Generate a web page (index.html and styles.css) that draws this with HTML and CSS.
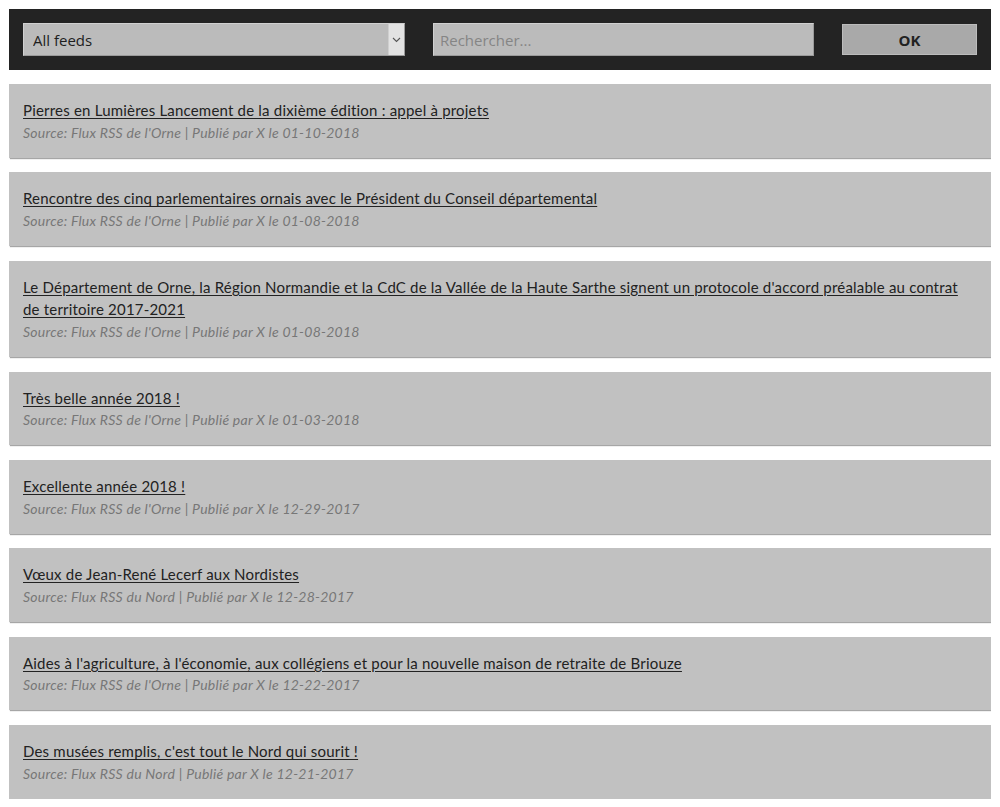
FILE: index.html
```html
<!DOCTYPE html>
<html lang="fr">
<head>
<meta charset="utf-8">
<title>Flux RSS</title>
<link rel="stylesheet" href="styles.css">
</head>
<body>
<header class="toolbar">
  <div class="select-wrap">
    <select class="feed-select">
      <option>All feeds</option>
    </select>
    <span class="select-arrow"><svg width="9" height="6" viewBox="0 0 9 6"><path d="M1 1 L4.5 4.5 L8 1" fill="none" stroke="#555" stroke-width="1.1"/></svg></span>
  </div>
  <input class="search" type="text" placeholder="Rechercher...">
  <button class="ok">OK</button>
</header>
<main class="list">
  <article class="card">
    <a class="title" href="#">Pierres en Lumières Lancement de la dixième édition : appel à projets</a>
    <p class="meta">Source: Flux RSS de l'Orne | Publié par X le 01-10-2018</p>
  </article>
  <article class="card">
    <a class="title" href="#">Rencontre des cinq parlementaires ornais avec le Président du Conseil départemental</a>
    <p class="meta">Source: Flux RSS de l'Orne | Publié par X le 01-08-2018</p>
  </article>
  <article class="card">
    <a class="title" href="#">Le Département de Orne, la Région Normandie et la CdC de la Vallée de la Haute Sarthe signent un protocole d'accord préalable au contrat de territoire 2017-2021</a>
    <p class="meta">Source: Flux RSS de l'Orne | Publié par X le 01-08-2018</p>
  </article>
  <article class="card">
    <a class="title" href="#">Très belle année 2018 !</a>
    <p class="meta">Source: Flux RSS de l'Orne | Publié par X le 01-03-2018</p>
  </article>
  <article class="card">
    <a class="title" href="#">Excellente année 2018 !</a>
    <p class="meta">Source: Flux RSS de l'Orne | Publié par X le 12-29-2017</p>
  </article>
  <article class="card">
    <a class="title" href="#">Vœux de Jean-René Lecerf aux Nordistes</a>
    <p class="meta">Source: Flux RSS du Nord | Publié par X le 12-28-2017</p>
  </article>
  <article class="card">
    <a class="title" href="#">Aides à l'agriculture, à l'économie, aux collégiens et pour la nouvelle maison de retraite de Briouze</a>
    <p class="meta">Source: Flux RSS de l'Orne | Publié par X le 12-22-2017</p>
  </article>
  <article class="card">
    <a class="title" href="#">Des musées remplis, c'est tout le Nord qui sourit !</a>
    <p class="meta">Source: Flux RSS du Nord | Publié par X le 12-21-2017</p>
  </article>
</main>
</body>
</html>
```
FILE: styles.css
```css
* { box-sizing: border-box; }
body {
  margin: 9px;
  background: #ffffff;
  font-family: "Lato", "Open Sans", sans-serif;
}
.toolbar {
  background: #232323;
  padding: 14px;
  display: grid;
  grid-template-columns: 382px 381px 135px;
  column-gap: 28px;
  height: 61px;
}
.select-wrap {
  display: flex;
  height: 33px;
  border: 1px solid #d0d0d0;
  border-right-color: #9a9a9a;
  border-bottom-color: #9a9a9a;
  background: #bbbbbb;
}
.feed-select {
  flex: 1;
  appearance: none;
  -webkit-appearance: none;
  border: none;
  background: transparent;
  font-family: "Open Sans", sans-serif;
  font-size: 15px;
  color: #1e1e1e;
  padding: 0 9px;
  outline: none;
}
.select-arrow {
  width: 16px;
  background: #e2e2e2;
  border-left: 1px solid #cfcfcf;
  display: flex;
  align-items: center;
  justify-content: center;
}
.search {
  height: 33px;
  border: 1px solid #d0d0d0;
  border-right-color: #9a9a9a;
  border-bottom-color: #9a9a9a;
  background: #bbbbbb;
  font-family: "Open Sans", sans-serif;
  font-size: 15px;
  padding: 0 6px;
  color: #222;
  outline: none;
}
.search::placeholder { color: #858585; }
.ok {
  height: 31px;
  margin-top: 1px;
  border: 1px solid #bcbcbc;
  background: #a9a9a9;
  font-family: "Open Sans", sans-serif;
  font-weight: 700;
  font-size: 15px;
  color: #222;
}
.list {
  margin-top: 14px;
  display: flex;
  flex-direction: column;
  gap: 14.9px;
}
.card {
  background: #c1c1c1;
  padding: 15px 14px 14px;
  box-shadow: 1px 1px 1px rgba(0, 0, 0, 0.35);
}
.title {
  display: block;
  font-size: 15px;
  letter-spacing: 0.2px;
  line-height: 22.5px;
  color: #222;
  text-decoration: underline;
  text-underline-offset: 2px;
}
.meta {
  margin: 0;
  font-size: 14px;
  letter-spacing: 0.25px;
  line-height: 22px;
  font-style: italic;
  color: #777;
}
```
